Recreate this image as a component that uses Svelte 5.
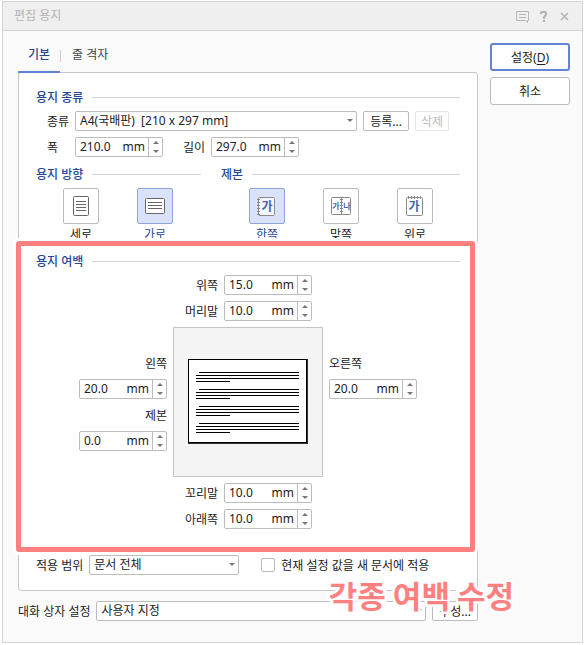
<script>
  let paperKind = $state('A4(국배판)\u00a0 [210 x 297 mm]');
  let scope = $state('문서 전체');
  let preset = $state('사용자 지정');
  let applyToNew = $state(false);
  let orientation = $state('가로');
  let binding = $state('한쪽');

  let sizes = $state({
    width: '210.0',
    length: '297.0',
    top: '15.0',
    header: '10.0',
    left: '20.0',
    gutter: '0.0',
    right: '20.0',
    footer: '10.0',
    bottom: '10.0'
  });

  function step(key, delta) {
    const next = Math.max(0, parseFloat(sizes[key] || '0') + delta);
    sizes[key] = next.toFixed(1);
  }

  const paragraphs = [13, 30, 47, 64];
  const ticks = [11, 14, 17, 20, 23, 26];
</script>

{#snippet spin(id, key)}
  <span class="spin">
    <input {id} type="text" bind:value={sizes[key]} />
    <span class="unit">mm</span>
    <span class="steps">
      <button type="button" aria-label="늘리기" onclick={() => step(key, 1)}><i class="up"></i></button>
      <button type="button" aria-label="줄이기" onclick={() => step(key, -1)}><i class="down"></i></button>
    </span>
  </span>
{/snippet}

<div class="dialog" role="dialog" aria-labelledby="title">
  <header>
    <h1 id="title">편집 용지</h1>
    <button type="button" aria-label="의견">
      <svg width="13" height="13" viewBox="0 0 13 13" fill="none" stroke="currentColor">
        <path d="M.5 1.500h12v9h-1v2l-2-2h-9z" />
        <path d="M3 4.500h7M3 7.500h7" />
      </svg>
    </button>
    <button type="button" aria-label="도움말">
      <svg width="13" height="13" viewBox="0 0 13 13" fill="none" stroke="currentColor" stroke-width="2">
        <path d="M4 4V2.500Q4 2 5 2h3q1 0 1 1v1.500q0 .5-.5 1L7 7v2M6 11h2" />
      </svg>
    </button>
    <button type="button" aria-label="닫기">
      <svg width="13" height="13" viewBox="0 0 13 13" fill="none" stroke="currentColor" stroke-width="1.500">
        <path d="M3 3l7 7M10 3l-7 7" />
      </svg>
    </button>
  </header>

  <div class="body">
    <main>
      <div class="tabs" role="tablist">
        <button type="button" role="tab" class="active" aria-selected="true">기본</button>
        <span class="bar"></span>
        <button type="button" role="tab" aria-selected="false">줄 격자</button>
      </div>

      <div class="panel">
        <section>
          <h2>용지 종류</h2>
          <div class="row">
            <label class="name" for="kind">종류</label>
            <span class="select grow">
              <select id="kind" bind:value={paperKind}><option>{'A4(국배판)\u00a0 [210 x 297 mm]'}</option></select>
            </span>
            <button type="button" class="btn wide">등록...</button>
            <button type="button" class="btn narrow" disabled>삭제</button>
          </div>
          <div class="row">
            <label class="name" for="w">폭</label>
            {@render spin('w', 'width')}
            <label class="second" for="l">길이</label>
            {@render spin('l', 'length')}
          </div>
        </section>

        <div class="choices">
          <section class="orient">
            <h2>용지 방향</h2>
            <div class="tiles">
              <button type="button" class="tile" class:on={orientation === '세로'} onclick={() => (orientation = '세로')}>
                <svg viewBox="0 0 34 34" fill="none" stroke="#666">
                  <rect x="9.500" y="7.500" width="15" height="19" rx="1" fill="#fff" />
                  <path d="M12 12.500h10M12 15.500h10M12 18.500h10M12 21.500h10" />
                </svg>
                <span>세로</span>
              </button>
              <button type="button" class="tile" class:on={orientation === '가로'} onclick={() => (orientation = '가로')}>
                <svg viewBox="0 0 34 34" fill="none" stroke="#666">
                  <rect x="7.500" y="9.500" width="19" height="15" rx="1" fill="#fff" />
                  <path d="M10 13.500h14M10 16.500h14M10 19.500h14" />
                </svg>
                <span>가로</span>
              </button>
            </div>
          </section>
          <section class="bind">
            <h2>제본</h2>
            <div class="tiles">
              <button type="button" class="tile" class:on={binding === '한쪽'} onclick={() => (binding = '한쪽')}>
                <svg viewBox="0 0 34 34" fill="none" stroke="#888">
                  <rect x="8.500" y="8.500" width="16" height="18" rx="1" fill="#f4f6fd" />
                  {#each ticks as y}<path d="M7 {y - 0.5}h3" />{/each}
                  <text x="17" y="22" font-size="12">가</text>
                </svg>
                <span>한쪽</span>
              </button>
              <button type="button" class="tile" class:on={binding === '맞쪽'} onclick={() => (binding = '맞쪽')}>
                <svg viewBox="0 0 34 34" fill="none" stroke="#888">
                  <rect x="7.500" y="8.500" width="19" height="17" rx="1" fill="#fff" />
                  <path d="M17.500 8v18" />
                  {#each ticks.slice(0, 5) as y}<path d="M16 {y - 0.5}h3" />{/each}
                  <text x="12" y="20" font-size="8">가</text>
                  <text x="23" y="20" font-size="8">나</text>
                </svg>
                <span>맞쪽</span>
              </button>
              <button type="button" class="tile" class:on={binding === '위로'} onclick={() => (binding = '위로')}>
                <svg viewBox="0 0 34 34" fill="none" stroke="#888">
                  <rect x="8.500" y="8.500" width="16" height="18" rx="1" fill="#fff" />
                  {#each ticks.slice(0, 5) as x}<path d="M{x - 0.5} 7v3" />{/each}
                  <text x="16" y="22" font-size="12">가</text>
                </svg>
                <span>위로</span>
              </button>
            </div>
          </section>
        </div>

        <section class="margins">
          <h2>용지 여백</h2>
          <div class="pair"><label for="mt">위쪽</label>{@render spin('mt', 'top')}</div>
          <div class="pair"><label for="mh">머리말</label>{@render spin('mh', 'header')}</div>
          <div class="middle">
            <div class="side">
              <label for="ml">왼쪽</label>
              {@render spin('ml', 'left')}
              <label for="mg">제본</label>
              {@render spin('mg', 'gutter')}
            </div>
            <div class="preview">
              <svg width="120" height="85" viewBox="0 0 120 85" shape-rendering="crispEdges">
                <rect width="120" height="85" fill="#333" />
                <rect width="119" height="84" fill="#000" />
                <rect x="1" y="1" width="117" height="82" fill="#fff" />
                {#each paragraphs as y}
                  <path fill="#000" d="M11 {y}h100v1h-100zM8 {y + 3}h103v1h-103zM8 {y + 6}h103v1h-103zM8 {y + 9}h34v1h-34z" />
                {/each}
              </svg>
            </div>
            <div class="side right">
              <label for="mr">오른쪽</label>
              {@render spin('mr', 'right')}
            </div>
          </div>
          <div class="pair"><label for="mf">꼬리말</label>{@render spin('mf', 'footer')}</div>
          <div class="pair"><label for="mb">아래쪽</label>{@render spin('mb', 'bottom')}</div>
        </section>

        <div class="row scope">
          <label for="scope">적용 범위</label>
          <span class="select mid">
            <select id="scope" bind:value={scope}><option>문서 전체</option></select>
          </span>
          <span class="check">
            <input id="apply" type="checkbox" bind:checked={applyToNew} />
            <label for="apply">현재 설정 값을 새 문서에 적용</label>
          </span>
        </div>
      </div>

      <div class="row preset">
        <label for="preset">대화 상자 설정</label>
        <span class="select grow">
          <select id="preset" bind:value={preset}><option>사용자 지정</option></select>
        </span>
        <button type="button" class="btn wide">구성...</button>
        <strong class="note">각종 여백 수정</strong>
      </div>
    </main>

    <aside>
      <button type="button" class="btn primary">설정(<u>D</u>)</button>
      <button type="button" class="btn">취소</button>
    </aside>
  </div>
</div>

<style>
  :global(body) {
    background: #fff;
  }

  .dialog {
    margin: 1px 2px 2px;
    border: 1px solid #d4d4d4;
    background: #fafafa;
    color: #222;
  }

  .dialog,
  button,
  input,
  select {
    font-family: 'Noto Sans', 'Noto Sans CJK KR', sans-serif;
    font-size: 12px;
    line-height: 20px;
  }

  *,
  *::before,
  *::after {
    box-sizing: border-box;
  }

  button {
    margin: 0;
    padding: 0;
    border: 0;
    background: none;
    color: inherit;
    white-space: nowrap;
  }

  label {
    padding-top: 2px;
    line-height: 18px;
    white-space: nowrap;
  }

  header {
    display: flex;
    align-items: center;
    gap: 8px;
    height: 29px;
    padding: 0 11px;
    border-bottom: 1px solid #d4d4d4;
    background: #efefef;
    color: #b4b4b4;
  }

  h1 {
    flex: 1;
    margin: 0;
    font-size: 12px;
    font-weight: 400;
  }

  header button,
  header svg {
    display: block;
    width: 13px;
    height: 13px;
  }

  .body {
    display: flex;
    gap: 12px;
    padding: 0 12px 21px 15px;
  }

  main {
    flex: 1;
    min-width: 0;
  }

  .tabs {
    display: flex;
    align-items: center;
    height: 42px;
    margin-bottom: -1px;
  }

  .tabs button {
    height: 42px;
    padding: 8px 11px 0;
    border-bottom: 2px solid transparent;
    color: #444;
  }

  .tabs .active {
    width: 42px;
    padding: 8px 0 0;
    border-color: #5f82d8;
    color: #264796;
    font-weight: 500;
    position: relative;
  }

  .bar {
    width: 1px;
    height: 12px;
    margin-top: 8px;
    background: #d0d0d0;
  }

  .panel {
    padding: 14px 17px 15px;
    border: 1px solid #c6c6c6;
    border-radius: 3px;
    background: #fff;
  }

  h2 {
    display: flex;
    align-items: center;
    gap: 9px;
    margin: 0 0 4px;
    padding-top: 2px;
    color: #264796;
    font-size: 12px;
    font-weight: 500;
    line-height: 18px;
    white-space: nowrap;
  }

  h2::after {
    content: '';
    flex: 1;
    height: 1px;
    margin-bottom: 2px;
    background: #d4d4d4;
  }

  .row {
    display: flex;
    align-items: center;
    gap: 6px;
    height: 20px;
  }

  section > .row {
    padding-right: 11px;
  }

  .row + .row {
    margin-top: 6px;
  }

  .name {
    width: 33px;
    padding-left: 11px;
  }

  .second {
    width: 36px;
    padding-left: 14px;
  }

  .select {
    position: relative;
    display: block;
  }

  .select::after {
    content: '';
    position: absolute;
    top: 8px;
    right: 4px;
    border: 3px solid transparent;
    border-top-color: #777;
    border-bottom: 0;
    pointer-events: none;
  }

  .grow {
    flex: 1;
    min-width: 0;
  }

  .mid {
    width: 150px;
  }

  select {
    appearance: none;
    display: block;
    width: 100%;
    height: 20px;
    padding: 0 16px 0 4px;
    border: 1px solid #bcbcbc;
    border-radius: 2px;
    background: #fff;
    color: #222;
    line-height: 18px;
  }

  .btn {
    height: 20px;
    padding-top: 1px;
    border: 1px solid #bcbcbc;
    border-radius: 2px;
    background: #fff;
    line-height: 18px;
  }

  .wide {
    width: 46px;
  }

  .narrow {
    width: 34px;
  }

  .btn:disabled {
    border-color: #e6e6e6;
    color: #bcbcbc;
  }

  .spin {
    display: flex;
    width: 88px;
    height: 20px;
    border: 1px solid #bcbcbc;
    border-radius: 2px;
    background: #fff;
    line-height: 18px;
  }

  .spin input {
    flex: 1;
    min-width: 0;
    padding: 0 0 0 4px;
    border: 0;
    background: none;
    color: #222;
    line-height: 18px;
  }

  .unit {
    padding-right: 3px;
  }

  .steps {
    display: flex;
    flex-direction: column;
    width: 14px;
    border-left: 1px solid #bcbcbc;
  }

  .steps button {
    display: flex;
    flex: 1;
    align-items: center;
    justify-content: center;
  }

  .up,
  .down {
    border: 3px solid transparent;
  }

  .up {
    border-top: 0;
    border-bottom-color: #777;
  }

  .down {
    border-bottom: 0;
    border-top-color: #777;
  }

  .choices {
    display: flex;
    gap: 20px;
    margin-top: 7px;
  }

  .orient {
    flex: 165;
  }

  .bind {
    flex: 239;
  }

  .tiles {
    display: flex;
    gap: 38px;
    padding-left: 27px;
  }

  .bind .tiles {
    padding-left: 28px;
  }

  .tile {
    display: block;
    width: 36px;
  }

  .tile svg {
    display: block;
    width: 36px;
    height: 36px;
    border: 1px solid #bcbcbc;
    border-radius: 2px;
    background: #fff;
  }

  .tile svg text {
    fill: #4264b4;
    stroke: none;
    font-family: 'Noto Sans CJK KR', sans-serif;
    font-weight: 700;
    text-anchor: middle;
  }

  .tile span {
    display: block;
    padding-top: 2px;
    line-height: 18px;
  }

  .tile.on {
    color: #264796;
  }

  .tile.on svg {
    border-color: #8ea4e0;
    background: #dae2f8;
  }

  .margins {
    position: relative;
    display: flex;
    flex-direction: column;
    gap: 6px;
    margin-top: 7px;
  }

  .margins h2 {
    margin-bottom: -2px;
  }

  .margins::before {
    content: '';
    position: absolute;
    inset: -10px -15px -23px -20px;
    border: 5px solid #ff8080;
    border-radius: 3px;
    box-shadow: 0 0 0 3px #fff;
    pointer-events: none;
  }

  .pair {
    display: flex;
    gap: 6px;
    width: 150px;
    margin: 0 auto;
  }

  .pair label {
    width: 45px;
    text-align: right;
  }

  .middle {
    display: flex;
    justify-content: center;
    gap: 6px;
  }

  .preview {
    display: flex;
    align-items: flex-start;
    justify-content: center;
    width: 150px;
    height: 150px;
    padding-top: 31px;
    border: 1px solid #c6c6c6;
    background: #f4f4f4;
  }

  .side {
    display: flex;
    flex-direction: column;
    gap: 6px;
    padding-top: 26px;
    text-align: right;
  }

  .right {
    text-align: left;
  }

  .scope {
    margin-top: 26px;
  }

  .check {
    display: flex;
    align-items: center;
    gap: 6px;
    margin-left: 16px;
  }

  .check input {
    appearance: none;
    width: 14px;
    height: 14px;
    margin: 0;
    border: 1px solid #bcbcbc;
    border-radius: 2px;
    background: #fff;
  }

  .check input:checked {
    background: #5f82d8;
  }

  .preset {
    position: relative;
    margin-top: 10px;
  }

  .note {
    position: absolute;
    right: -36px;
    bottom: 6px;
    color: #ff8080;
    font-family: 'Noto Sans CJK KR', sans-serif;
    font-size: 31px;
    font-weight: 700;
    line-height: 40px;
    white-space: nowrap;
    -webkit-text-stroke: 5px #fff;
    paint-order: stroke fill;
    stroke-linejoin: round;
    pointer-events: none;
  }

  aside {
    display: flex;
    flex-direction: column;
    gap: 6px;
    width: 80px;
    padding-top: 12px;
  }

  aside .btn {
    height: 28px;
    border-radius: 3px;
  }

  aside .primary {
    border: 2px solid #6483d6;
  }

  u {
    text-underline-offset: 2px;
  }
</style>
